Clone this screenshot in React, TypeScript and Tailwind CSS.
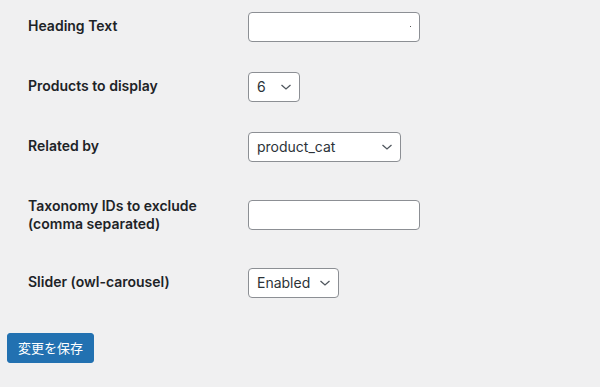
const labelFont = { fontFamily: 'Inter, "Noto Sans", sans-serif' };

function Chevron() {
  return (
    <svg width="12" height="8" viewBox="0 0 12 8" className="absolute right-[7px] top-1/2 -translate-y-1/2">
      <polyline points="1.5,2 6,6 10.5,2" fill="none" stroke="#50575e" strokeWidth="1.3" />
    </svg>
  );
}

function SelectBox({ value, width }: { value: string; width: string }) {
  return (
    <div className={`relative h-[30px] ${width} flex items-center rounded-[4px] border border-[#8c8f94] bg-white pl-2 pr-6 text-sm text-[#2c3338]`}>
      <span>{value}</span>
      <Chevron />
    </div>
  );
}

function TextBox({ dot }: { dot?: boolean }) {
  return (
    <div className="relative h-[30px] w-[172px] rounded-[4px] border border-[#8c8f94] bg-white">
      {dot && <span className="absolute left-[161px] top-[13px] h-[1px] w-[1px] bg-[#555]" />}
    </div>
  );
}

function Row({ label, children }: { label: React.ReactNode; children: React.ReactNode }) {
  return (
    <div className="flex">
      <div className="w-[210px] shrink-0 py-5 pr-[10px] text-sm font-semibold leading-[1.3] text-[#1d2327]">{label}</div>
      <div className="flex items-center px-[10px] py-[15px]">{children}</div>
    </div>
  );
}

export default function App() {
  return (
    <div className="min-h-[387px] w-[600px] overflow-hidden bg-[#f0f0f1]" style={labelFont}>
      <div className="mt-[-3px] pl-[28px]">
        <Row label="Heading Text">
          <TextBox dot />
        </Row>
        <Row label="Products to display">
          <SelectBox value="6" width="w-[52px]" />
        </Row>
        <Row label="Related by">
          <SelectBox value="product_cat" width="w-[153px]" />
        </Row>
        <Row
          label={
            <>
              Taxonomy IDs to exclude
              <br />
              (comma separated)
            </>
          }
        >
          <TextBox />
        </Row>
        <Row label="Slider (owl-carousel)">
          <SelectBox value="Enabled" width="w-[91px]" />
        </Row>
      </div>
      <div className="ml-[7px] mt-5">
        <button
          className="h-[30px] rounded-[3px] border border-[#2271b1] bg-[#2271b1] px-[10px] text-[13px] text-white"
          style={{ fontFamily: 'Inter, "Noto Sans CJK JP", sans-serif' }}
        >
          変更を保存
        </button>
      </div>
    </div>
  );
}
